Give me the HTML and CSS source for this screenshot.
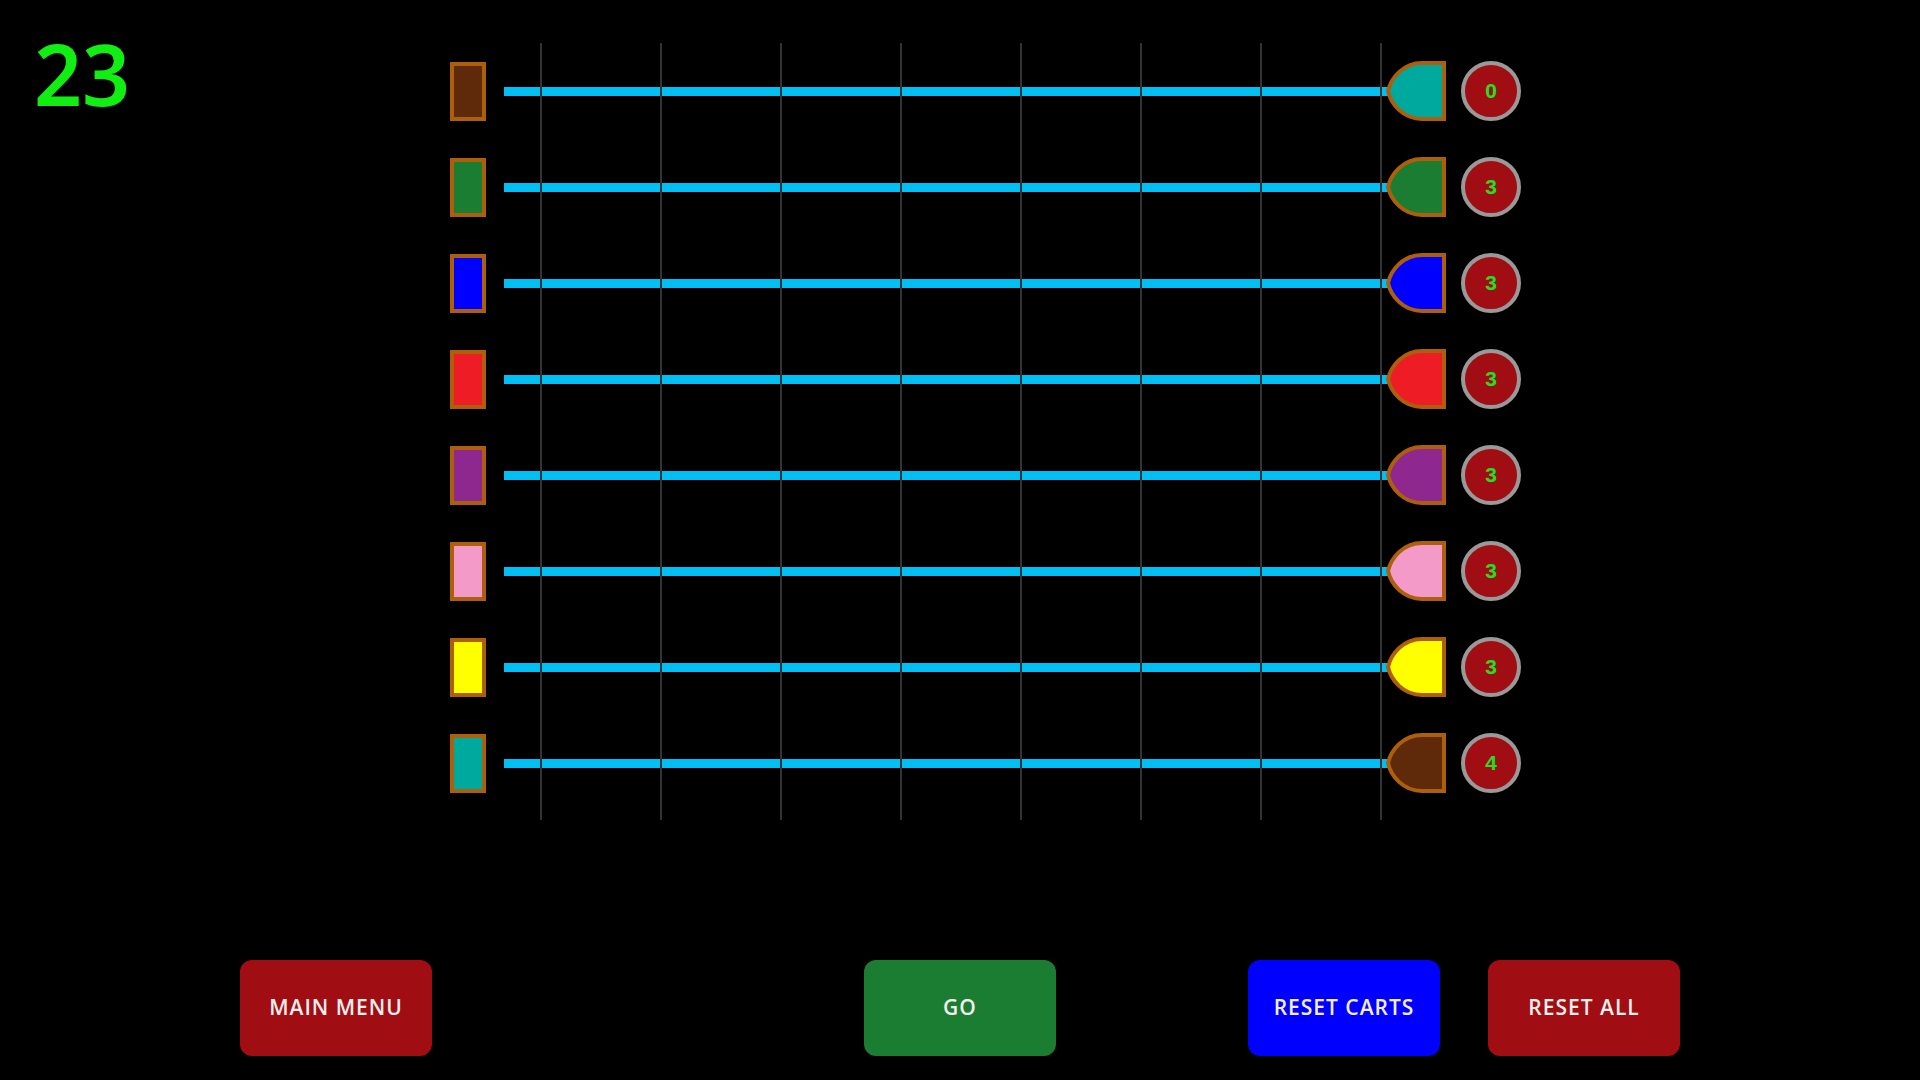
FILE: index.html
```html
<!DOCTYPE html>
<html>
<head>
<meta charset="utf-8">
<link rel="stylesheet" href="styles.css">
</head>
<body>
<div class="stage">
  <div class="counter">23</div>
  <div class="board">
    <div class="row"><div class="box brown"></div><div class="lane"></div><svg class="cart teal" viewBox="0 0 60 60"><path d="M58 2 L36 2 C17 2 5 17 2 30 C5 43 17 58 36 58 L58 58 Z"/></svg><div class="score">0</div></div>
    <div class="row"><div class="box green"></div><div class="lane"></div><svg class="cart green" viewBox="0 0 60 60"><path d="M58 2 L36 2 C17 2 5 17 2 30 C5 43 17 58 36 58 L58 58 Z"/></svg><div class="score">3</div></div>
    <div class="row"><div class="box blue"></div><div class="lane"></div><svg class="cart blue" viewBox="0 0 60 60"><path d="M58 2 L36 2 C17 2 5 17 2 30 C5 43 17 58 36 58 L58 58 Z"/></svg><div class="score">3</div></div>
    <div class="row"><div class="box red"></div><div class="lane"></div><svg class="cart red" viewBox="0 0 60 60"><path d="M58 2 L36 2 C17 2 5 17 2 30 C5 43 17 58 36 58 L58 58 Z"/></svg><div class="score">3</div></div>
    <div class="row"><div class="box purple"></div><div class="lane"></div><svg class="cart purple" viewBox="0 0 60 60"><path d="M58 2 L36 2 C17 2 5 17 2 30 C5 43 17 58 36 58 L58 58 Z"/></svg><div class="score">3</div></div>
    <div class="row"><div class="box pink"></div><div class="lane"></div><svg class="cart pink" viewBox="0 0 60 60"><path d="M58 2 L36 2 C17 2 5 17 2 30 C5 43 17 58 36 58 L58 58 Z"/></svg><div class="score">3</div></div>
    <div class="row"><div class="box yellow"></div><div class="lane"></div><svg class="cart yellow" viewBox="0 0 60 60"><path d="M58 2 L36 2 C17 2 5 17 2 30 C5 43 17 58 36 58 L58 58 Z"/></svg><div class="score">3</div></div>
    <div class="row"><div class="box teal"></div><div class="lane"></div><svg class="cart brown" viewBox="0 0 60 60"><path d="M58 2 L36 2 C17 2 5 17 2 30 C5 43 17 58 36 58 L58 58 Z"/></svg><div class="score">4</div></div>
    <div class="gridlines"></div>
  </div>
</div>
<div class="controls">
  <button class="btn red-btn">MAIN MENU</button>
  <button class="btn green-btn go">GO</button>
  <button class="btn blue-btn reset-carts">RESET CARTS</button>
  <button class="btn red-btn reset-all">RESET ALL</button>
</div>
</body>
</html>
```
FILE: styles.css
```css
html, body {
  margin: 0;
  padding: 0;
  background: #000;
  width: 1920px;
  height: 1080px;
  overflow: hidden;
}

.brown  { --c: #5e2a0a; }
.green  { --c: #1a7d32; }
.blue   { --c: #0000ff; }
.red    { --c: #ee1c24; }
.purple { --c: #8e278e; }
.pink   { --c: #f49ac8; }
.yellow { --c: #ffff00; }
.teal   { --c: #00a99d; }

.stage {
  display: flex;
  align-items: flex-start;
}

.counter {
  width: 416px;
  padding-left: 34px;
  padding-top: 32px;
  font-family: "Noto Sans", sans-serif;
  font-weight: 600;
  font-size: 84px;
  line-height: 1;
  letter-spacing: 0;
  color: #11ee11;
}

.board {
  position: relative;
  margin-top: 43px;
  width: 1071px;
  height: 777px;
}

.row {
  display: flex;
  align-items: center;
  height: 96px;
}

.box {
  box-sizing: border-box;
  width: 36px;
  height: 59px;
  border: 4px solid #ad5f0c;
  background: var(--c);
}

.lane {
  margin-left: 18px;
  width: 884px;
  height: 9px;
  background: #00bff3;
  margin-right: -2px;
}

.cart {
  display: block;
  width: 60px;
  height: 60px;
}

.cart path {
  fill: var(--c);
  stroke: #ad5f0c;
  stroke-width: 4;
  stroke-linejoin: miter;
}

.score {
  box-sizing: border-box;
  margin-left: 15px;
  width: 60px;
  height: 60px;
  border-radius: 50%;
  border: 4px solid #999;
  background: #a00d12;
  color: #22e022;
  font-family: "Liberation Sans", sans-serif;
  font-weight: bold;
  font-size: 21px;
  display: flex;
  align-items: center;
  justify-content: center;
}

.gridlines {
  position: absolute;
  left: 90px;
  top: 0;
  width: 842px;
  height: 777px;
  background-image: linear-gradient(to right, #333 0, #333 2px, transparent 2px);
  background-size: 120px 100%;
  pointer-events: none;
}

.controls {
  display: flex;
  margin-top: 140px;
  padding-left: 240px;
}

.btn {
  width: 192px;
  height: 96px;
  border: none;
  border-radius: 12px;
  padding: 0 0 3px 0;
  color: #f4eeee;
  font-family: "Open Sans", sans-serif;
  font-weight: 600;
  font-size: 21px;
  letter-spacing: 1px;
}

.red-btn { background: #a00d12; }
.green-btn { background: #1a7d32; }
.blue-btn { background: #0000ff; }

.go { margin-left: 432px; }
.reset-carts { margin-left: 192px; }
.reset-all { margin-left: 48px; }
```
